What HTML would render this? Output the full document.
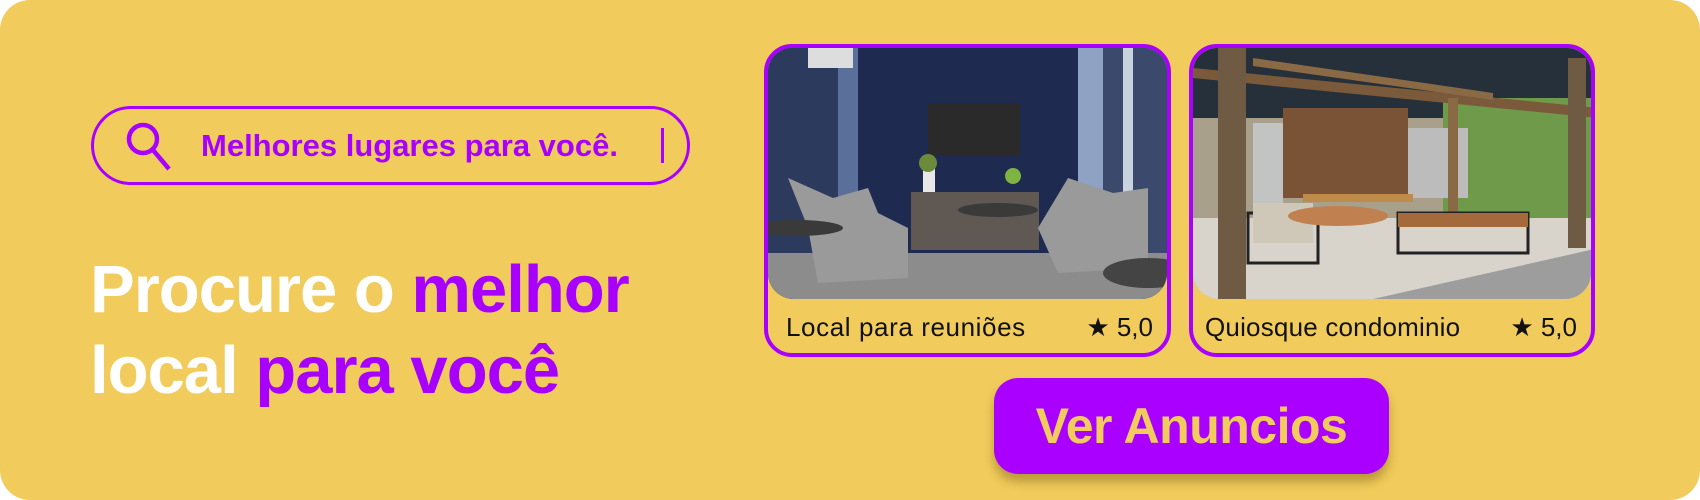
<!DOCTYPE html>
<html><head><meta charset="utf-8"><style>
*{margin:0;padding:0;box-sizing:border-box}
body{width:1700px;height:500px;background:#fff;font-family:"Liberation Sans",sans-serif;overflow:hidden;position:relative}
.bg{position:absolute;left:0;top:0;width:1700px;height:500px;background:#F1CC5C;border-radius:30px}
.search{position:absolute;left:91px;top:106px;width:599px;height:79px;border:3.5px solid #A800FF;border-radius:40px}
.search svg{position:absolute;left:28px;top:10px}
.stext{position:absolute;left:107px;top:19px;font-weight:bold;font-size:31px;color:#A800FF;letter-spacing:0px;white-space:nowrap}
.cursor{position:absolute;left:567px;top:19px;width:3px;height:35px;background:#A800FF}
.h{position:absolute;left:90px;font-weight:bold;font-size:67px;color:#fff;letter-spacing:-1px;white-space:nowrap;line-height:1}
.p{color:#A800FF}
.card{position:absolute;top:44px;height:313px;border:4px solid #A800FF;border-radius:28px;overflow:hidden;background:#F1CC5C}
.img{position:absolute;left:0;top:0;right:0;height:251px;border-radius:0 0 26px 26px;overflow:hidden}
.lab{position:absolute;left:18px;top:264px;font-size:26px;letter-spacing:0.6px;color:#111;white-space:nowrap}
.rat{position:absolute;right:14px;top:264px;font-size:26px;color:#111;white-space:nowrap}
.btn{position:absolute;left:994px;top:378px;width:395px;height:96px;background:#AA00FF;border-radius:24px;box-shadow:0 8px 10px rgba(120,90,20,.45);color:#F1CC5C;font-weight:bold;font-size:50px;text-align:center;line-height:96px;letter-spacing:-0.5px}
</style></head><body>
<div class="bg"></div>
<div class="search">
<svg width="56" height="56" viewBox="0 0 56 56"><circle cx="21" cy="20" r="14" fill="none" stroke="#A800FF" stroke-width="4.5"/><line x1="31" y1="31" x2="47" y2="50" stroke="#A800FF" stroke-width="4.5"/></svg>
<div class="stext">Melhores lugares para você.</div>
<div class="cursor"></div>
</div>
<div class="h" style="top:256px">Procure o <span class="p">melhor</span></div>
<div class="h" style="top:337px">local <span class="p">para você</span></div>

<div class="card" style="left:764px;width:407px">
<div class="img">
<svg width="407" height="251" viewBox="0 0 407 251" preserveAspectRatio="none">
<rect width="407" height="251" fill="#1e2a4f"/>
<rect x="0" y="0" width="70" height="251" fill="#2c3a5e"/>
<rect x="70" y="0" width="20" height="251" fill="#5a6f9a"/>
<rect x="310" y="0" width="25" height="251" fill="#8ea3c4"/>
<rect x="335" y="0" width="72" height="251" fill="#3b4a6c"/>
<rect x="355" y="0" width="10" height="251" fill="#c9d3e0"/>
<rect x="40" y="0" width="45" height="20" fill="#ddd"/>
<rect x="160" y="55" width="92" height="53" fill="#2a2a2a"/>
<rect x="143" y="144" width="128" height="58" fill="#5f5853"/>
<rect x="0" y="205" width="407" height="46" fill="#8c8c8c"/>
<path d="M20 130 L65 150 L100 140 L110 165 L140 180 L140 230 L50 235 L40 180Z" fill="#9a9a9a"/>
<path d="M300 130 L345 145 L380 140 L380 220 L290 225 L270 180Z" fill="#9a9a9a"/>
<ellipse cx="30" cy="180" rx="45" ry="8" fill="#3a3a3a"/>
<ellipse cx="230" cy="162" rx="40" ry="7" fill="#3a3a3a"/>
<ellipse cx="380" cy="225" rx="45" ry="15" fill="#444"/>
<rect x="155" y="120" width="12" height="24" fill="#e8e8e8"/>
<circle cx="160" cy="115" r="9" fill="#6b8a3c"/>
<circle cx="245" cy="128" r="8" fill="#7cb342"/>
</svg>
</div>
<div class="lab">Local para reuniões</div>
<div class="rat">★ 5,0</div>
</div>

<div class="card" style="left:1189px;width:406px">
<div class="img">
<svg width="406" height="251" viewBox="0 0 406 251" preserveAspectRatio="none">
<rect width="406" height="251" fill="#a9a08c"/>
<rect x="0" y="0" width="406" height="70" fill="#26303a"/>
<rect x="250" y="50" width="156" height="120" fill="#6f9a4a"/>
<path d="M0 20 L406 60 L406 70 L0 30Z" fill="#7a5a3a"/>
<path d="M60 10 L300 45 L300 52 L60 18Z" fill="#8a6a44"/>
<rect x="90" y="60" width="125" height="90" fill="#7a5236"/>
<rect x="60" y="75" width="30" height="100" fill="#c2c4c4"/>
<rect x="215" y="80" width="60" height="70" fill="#bcbcbc"/>
<rect x="0" y="170" width="406" height="81" fill="#d8d4cc"/>
<path d="M180 251 L406 200 L406 251Z" fill="#9d9d9d"/>
<rect x="25" y="0" width="28" height="251" fill="#6f5a44"/>
<rect x="375" y="10" width="18" height="190" fill="#6f5a44"/>
<rect x="255" y="50" width="10" height="120" fill="#8a6a44"/>
<rect x="55" y="165" width="70" height="50" fill="none" stroke="#222" stroke-width="3"/>
<rect x="60" y="155" width="60" height="40" fill="#cfc8b8"/>
<rect x="205" y="165" width="130" height="40" fill="none" stroke="#222" stroke-width="3"/>
<rect x="205" y="165" width="130" height="14" fill="#a56a3c"/>
<rect x="110" y="146" width="110" height="8" fill="#c08a4a"/>
<ellipse cx="145" cy="168" rx="50" ry="10" fill="#c08050"/>
</svg>
</div>
<div class="lab" style="left:12px;letter-spacing:0.2px">Quiosque condominio</div>
<div class="rat">★ 5,0</div>
</div>

<div class="btn">Ver Anuncios</div>
</body></html>
